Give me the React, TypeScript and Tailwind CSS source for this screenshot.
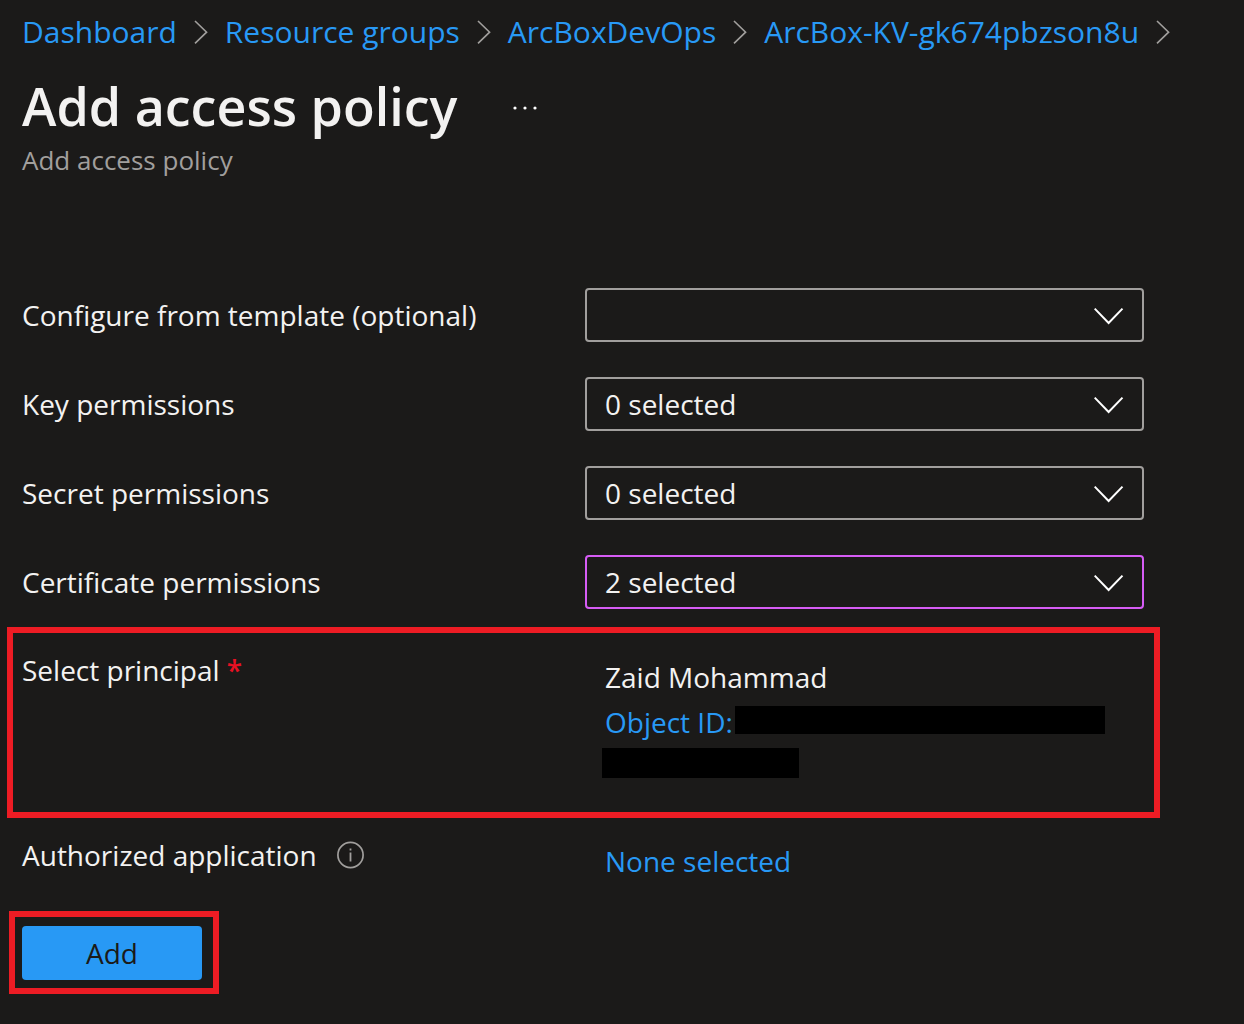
import React from "react";

const crumbs = ["Dashboard", "Resource groups", "ArcBoxDevOps", "ArcBox-KV-gk674pbzson8u"];

type Field = { id: string; label: string; options: string[]; active?: boolean };

const fields: Field[] = [
  { id: "template", label: "Configure from template (optional)", options: [""] },
  { id: "key", label: "Key permissions", options: ["0 selected"] },
  { id: "secret", label: "Secret permissions", options: ["0 selected"] },
  { id: "certificate", label: "Certificate permissions", options: ["2 selected"], active: true },
];

function CrumbChevron() {
  return (
    <svg className="h-6 w-[14px] shrink-0" viewBox="0 0 14 24" fill="none" stroke="#a19f9d" strokeWidth="1.6" aria-hidden="true">
      <path d="M1 1 L12.6 12.2 L1 23.4" />
    </svg>
  );
}

function Breadcrumb() {
  return (
    <nav aria-label="Breadcrumb">
      <ol className="flex items-center gap-[17px] whitespace-nowrap text-[30px] leading-10 text-[#2899f5]">
        {crumbs.map((name) => (
          <li key={name} className="flex items-center gap-[17px]">
            <a href="#">{name}</a>
            <CrumbChevron />
          </li>
        ))}
      </ol>
    </nav>
  );
}

function SelectField({ field }: { field: Field }) {
  return (
    <div className="grid grid-cols-2 items-center gap-x-1">
      <label htmlFor={field.id}>{field.label}</label>
      <div className="relative">
        <select
          id={field.id}
          className={
            "block h-[54px] w-full appearance-none rounded-sm border-2 bg-[#1b1a19] pl-[18px] pr-16 text-[#f3f2f1] outline-none " +
            (field.active ? "border-[#d65cf5]" : "border-[#a19f9d]")
          }
        >
          {field.options.map((option) => (
            <option key={option}>{option}</option>
          ))}
        </select>
        <svg
          className="pointer-events-none absolute right-5 top-[19px] h-[18px] w-[30px]"
          viewBox="0 0 30 18"
          fill="none"
          stroke="#ffffff"
          strokeWidth="2"
          aria-hidden="true"
        >
          <path d="M0.7 1.6 L14.6 16 L28.5 1.6" />
        </svg>
      </div>
    </div>
  );
}

function InfoIcon() {
  return (
    <svg className="size-7" viewBox="0 0 28 28" fill="none" aria-hidden="true">
      <circle cx="13.5" cy="14" r="12.6" stroke="#a19f9d" strokeWidth="1.7" />
      <path d="M13.5 11.5 V20.5 M13.5 7.5 V9.5" stroke="#a19f9d" strokeWidth="1.8" />
    </svg>
  );
}

export default function App() {
  return (
    <main className="min-h-screen bg-[#1b1a19] pb-[30px] pl-[22px] pr-[100px] pt-3 font-['Open_Sans','Noto_Sans',sans-serif] text-[28px] leading-10 text-[#f3f2f1]">
      <Breadcrumb />

      <header className="mt-5">
        <div className="flex items-center gap-14">
          <h1 className="text-[52px] font-semibold leading-[68px]">Add access policy</h1>
          <button type="button" aria-label="More actions" className="flex h-6 items-center pt-1">
            <svg className="h-1 w-6" viewBox="0 0 24 4" fill="#ffffff" aria-hidden="true">
              <circle cx="2" cy="2" r="1.6" />
              <circle cx="12" cy="2" r="1.6" />
              <circle cx="22" cy="2" r="1.6" />
            </svg>
          </button>
        </div>
        <p className="text-[26px] leading-10 text-[#a19f9d]">Add access policy</p>
      </header>

      <form onSubmit={(event) => event.preventDefault()}>
        <div className="mt-[108px] flex flex-col gap-[35px]">
          {fields.map((field) => (
            <SelectField key={field.id} field={field} />
          ))}
        </div>

        <section className="-ml-[15px] -mr-4 mt-[18px] grid grid-cols-2 gap-x-1 border-6 border-[#ed1c24] pb-[34px] pl-[9px] pr-[10px] pt-[17px]">
          <div>
            Select principal <span className="font-semibold text-[#e81123]">*</span>
          </div>
          <div className="pl-5 pt-[7px]">
            <div>Zaid Mohammad</div>
            <div className="mt-[5px] flex items-start">
              <a href="#" className="whitespace-nowrap text-[#2899f5]">Object ID:</a>
              <span className="ml-[2px] mt-1 h-7 w-[370px] bg-black" />
            </div>
            <div className="-ml-[3px] mt-[6px] h-[30px] w-[197px] bg-black" />
          </div>
        </section>

        <div className="mt-[17px] grid grid-cols-2 items-start gap-x-1">
          <div className="flex items-center gap-5">
            Authorized application
            <button type="button" aria-label="About authorized application">
              <InfoIcon />
            </button>
          </div>
          <a href="#" className="pl-5 pt-[6px] text-[#2899f5]">None selected</a>
        </div>

        <div className="-ml-[13px] mt-[30px] w-fit border-6 border-[#ed1c24] pb-2 pl-[7px] pr-[11px] pt-[9px]">
          <button type="submit" className="block h-[54px] w-[180px] rounded-sm bg-[#2899f5] font-medium text-[#1b1a19]">
            Add
          </button>
        </div>
      </form>
    </main>
  );
}
